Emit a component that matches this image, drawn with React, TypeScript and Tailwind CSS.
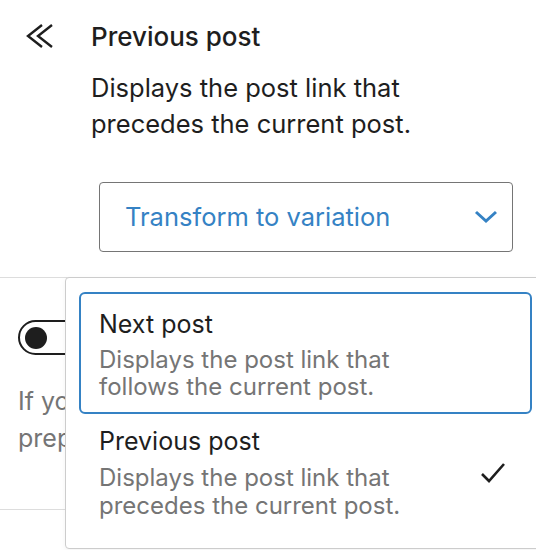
import React from "react";

function ChevronsLeft() {
  return (
    <svg width="30" height="28" viewBox="0 0 30 28" fill="none" stroke="#1e1e1e" strokeWidth="2.4">
      <path d="M17 2 L3 13 L17 24" />
      <path d="M27 2 L13 13 L27 24" />
    </svg>
  );
}

function ChevronDown() {
  return (
    <svg width="24" height="14" viewBox="0 0 24 14" fill="none" stroke="#3582c4" strokeWidth="3">
      <path d="M2 2 L12 11 L22 2" />
    </svg>
  );
}

function Check() {
  return (
    <svg width="26" height="24" viewBox="0 0 26 24" fill="none" stroke="#1e1e1e" strokeWidth="2.6">
      <path d="M2 13 L9 20 L24 3" />
    </svg>
  );
}

export default function App() {
  return (
    <div className="relative w-[536px] h-[550px] overflow-hidden bg-white font-['Inter',sans-serif] text-[#1e1e1e]">
      {/* block card */}
      <div className="flex pt-[19px]">
        <div className="w-[91px] shrink-0 pl-[25px] pt-[4px]">
          <ChevronsLeft />
        </div>
        <div className="flex-1">
          <h2 className="text-[26px] leading-[36px] font-medium">Previous post</h2>
          <p className="mt-[15px] text-[25.5px] leading-[36px]">
            Displays the post link that
            <br />
            precedes the current post.
          </p>
          <button className="mt-[40px] ml-[8px] flex h-[70px] w-[414px] items-center justify-between rounded-[4px] border-[1.5px] border-[#757575] pl-[25px] pr-[14px] text-[25.5px] text-[#3582c4]">
            <span>Transform to variation</span>
            <ChevronDown />
          </button>
        </div>
      </div>

      {/* settings panel */}
      <div className="mt-[25px] border-t border-[#dddddd] pl-[18px]">
        <div className="mt-[41px] flex items-center gap-[20px]">
          <div className="flex h-[35px] w-[72px] items-center rounded-full border-2 border-[#1e1e1e] pl-[5px]">
            <div className="h-[22px] w-[22px] rounded-full bg-[#1e1e1e]" />
          </div>
          <span className="text-[25px]">Display the title as a link</span>
        </div>
        <p className="mt-[26px] text-[25px] leading-[37px] text-[#757575] whitespace-nowrap">
          If you have entered a custom label, it will be
          <br />
          prepended before the title.
        </p>
      </div>
      <div className="mt-[52px] border-t border-[#dddddd]" />

      {/* variation popover */}
      <div className="absolute left-[65px] top-[277px] h-[272px] w-[500px] rounded-[4px] border border-[#cccccc] bg-white px-[13px] pt-[14px] shadow-[0_2px_6px_rgba(0,0,0,0.05)]">
        <div className="w-[453px] rounded-[6px] border-2 border-[#3582c4] pl-[18px] pt-[14px] pb-[12px]">
          <div className="text-[25px] leading-[32px]">Next post</div>
          <div className="mt-[6px] text-[24px] leading-[27px] text-[#757575]">
            Displays the post link that
            <br />
            follows the current post.
          </div>
        </div>
        <div className="flex w-[453px] items-center justify-between pl-[20px] pr-[26px] pt-[11px]">
          <div>
            <div className="text-[25px] leading-[32px]">Previous post</div>
            <div className="mt-[7px] text-[24px] leading-[28px] text-[#757575]">
              Displays the post link that
              <br />
              precedes the current post.
            </div>
          </div>
          <Check />
        </div>
      </div>
    </div>
  );
}
